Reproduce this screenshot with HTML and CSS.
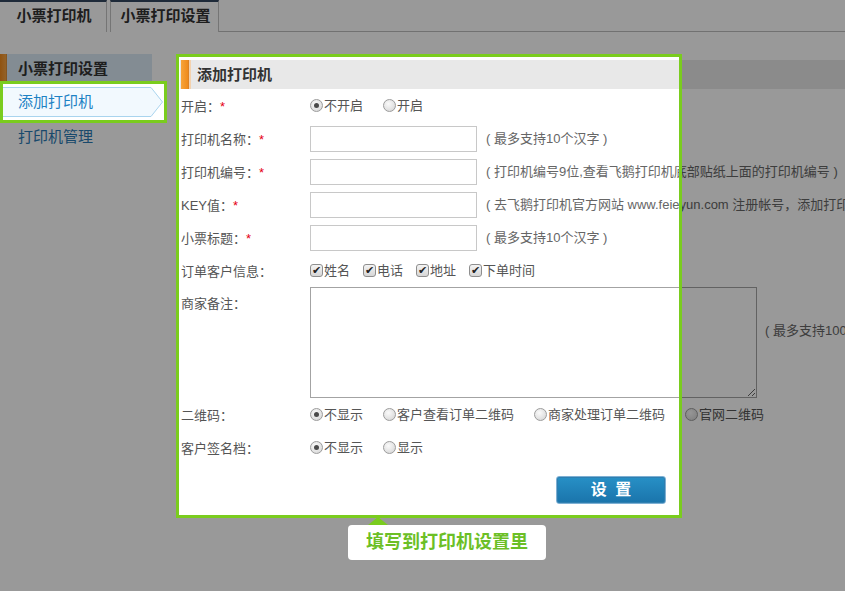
FILE: index.html
```html
<!DOCTYPE html>
<html lang="zh-CN">
<head>
<meta charset="utf-8">
<title>小票打印设置</title>
<link rel="stylesheet" href="styles.css">
</head>
<body>
<div class="page">
  <div class="tabs">
    <div class="tab">小票打印机</div>
    <div class="tab active">小票打印设置</div>
    <div class="tab-fill"></div>
  </div>
  <div class="layout">
    <aside class="side">
      <div class="side-head">小票打印设置</div>
      <div class="side-item current">
        <svg class="arrow-shape" width="164" height="30" viewBox="0 0 164 30"><polygon points="0.5,0.5 151,0.5 162.5,15 151,29.5 0.5,29.5" fill="#f2f9fe" stroke="#a9d4ee" stroke-width="1"/></svg>
        <span class="side-text">添加打印机</span>
      </div>
      <div class="side-item">打印机管理</div>
    </aside>
    <main class="main">
      <div class="main-head">添加打印机</div>
      <div class="form">
        <div class="row">
          <div class="label">开启<span class="colon">：</span><em>*</em></div>
          <div class="opts">
            <span class="opt"><span class="radio on"></span>不开启</span>
            <span class="opt"><span class="radio"></span>开启</span>
          </div>
        </div>
        <div class="row">
          <div class="label">打印机名称<span class="colon">：</span><em>*</em></div>
          <input class="field" type="text">
          <span class="hint">( 最多支持10个汉字 )</span>
        </div>
        <div class="row">
          <div class="label">打印机编号<span class="colon">：</span><em>*</em></div>
          <input class="field" type="text">
          <span class="hint">( 打印机编号9位,查看飞鹅打印机底部贴纸上面的打印机编号 )</span>
        </div>
        <div class="row">
          <div class="label">KEY值<span class="colon">：</span><em>*</em></div>
          <input class="field" type="text">
          <span class="hint">( 去飞鹅打印机官方网站 www.feieyun.com 注册帐号，添加打印机后获取KEY值 )</span>
        </div>
        <div class="row">
          <div class="label">小票标题<span class="colon">：</span><em>*</em></div>
          <input class="field" type="text">
          <span class="hint">( 最多支持10个汉字 )</span>
        </div>
        <div class="row">
          <div class="label">订单客户信息<span class="colon">：</span></div>
          <div class="opts">
            <span class="opt chk"><span class="check">✔</span>姓名</span>
            <span class="opt chk"><span class="check">✔</span>电话</span>
            <span class="opt chk"><span class="check">✔</span>地址</span>
            <span class="opt chk"><span class="check">✔</span>下单时间</span>
          </div>
        </div>
        <div class="row row-area">
          <div class="label label-top">商家备注<span class="colon">：</span></div>
          <textarea class="area"></textarea>
          <span class="hint hint-area">( 最多支持100个汉字 )</span>
        </div>
        <div class="row">
          <div class="label">二维码<span class="colon">：</span></div>
          <div class="opts">
            <span class="opt"><span class="radio on"></span>不显示</span>
            <span class="opt"><span class="radio"></span>客户查看订单二维码</span>
            <span class="opt"><span class="radio"></span>商家处理订单二维码</span>
            <span class="opt"><span class="radio"></span>官网二维码</span>
          </div>
        </div>
        <div class="row">
          <div class="label">客户签名档<span class="colon">：</span></div>
          <div class="opts">
            <span class="opt"><span class="radio on"></span>不显示</span>
            <span class="opt"><span class="radio"></span>显示</span>
          </div>
        </div>
        <div class="actions">
          <button class="btn" type="button">设 置</button>
        </div>
      </div>
    </main>
  </div>
</div>

<svg class="overlay" width="845" height="591" viewBox="0 0 845 591">
  <path fill="#000" fill-opacity="0.4" fill-rule="evenodd" d="M0 0H845V591H0Z M0 81H166V123H0Z M176 54H682V518H176Z"/>
</svg>
<div class="spot spot-menu"></div>
<div class="spot spot-dialog"></div>
<div class="tip">填写到打印机设置里</div>
</body>
</html>
```

FILE: styles.css
```css
* { box-sizing: border-box; }

html, body {
  margin: 0;
  padding: 0;
  width: 845px;
  height: 591px;
  overflow: hidden;
  background: #fff;
  font-family: "Liberation Sans", "Noto Sans CJK SC", sans-serif;
  font-size: 13px;
  color: #555;
}

.page {
  width: 845px;
  height: 591px;
  overflow: hidden;
}

/* top tabs */
.tabs {
  display: flex;
  height: 32px;
}
.tab {
  height: 32px;
  border-top: 2px solid #33465f;
  border-right: 1px solid #c4c4c4;
  font-size: 15px;
  font-weight: bold;
  color: #333;
  line-height: 28px;
  text-align: center;
  background: #fff;
}
.tab:first-child {
  width: 107px;
  padding-left: 2px;
}
.tab.active {
  width: 109px;
  margin-left: 3px;
  border-left: 1px solid #c4c4c4;
  padding-left: 2px;
}
.tab-fill {
  flex: 1;
  height: 32px;
  border-bottom: 1px solid #bcbcbc;
}

/* layout */
.layout {
  display: flex;
  margin-top: 22px;
}

.side {
  width: 152px;
  flex: none;
}
.side-head {
  height: 30px;
  line-height: 30px;
  padding-left: 18px;
  font-size: 15px;
  font-weight: bold;
  color: #333;
  background: linear-gradient(90deg, #f08a1c 0, #f6a445 6px, #c77a2a 7px, #dbe9f5 7px, #dbe9f5 100%);
}
.side-item {
  position: relative;
  height: 34px;
  line-height: 34px;
  padding-left: 18px;
  font-size: 15px;
  color: #2b7ab4;
}
.side-item.current {
  height: 36px;
  line-height: 30px;
  padding-top: 3px;
  width: 164px;
  color: #1d82c4;
}
.arrow-shape {
  position: absolute;
  left: 0;
  top: 3px;
  display: block;
}
.side-text {
  position: relative;
}

.main {
  flex: 1;
  margin-left: 28px;
  padding-top: 6px;
}
.main-head {
  height: 29px;
  line-height: 29px;
  padding-left: 17px;
  font-size: 15px;
  font-weight: bold;
  color: #333;
  background: linear-gradient(90deg, #e8e8e8 0, #e8e8e8 1px, #f7a43a 1px, #ef8b1c 8px, #c9782c 9px, #f4d2ae 9px, #f4d2ae 11px, #e8e8e8 11px);
}

/* form */
.form {
  padding-left: 1px;
}
.row {
  display: flex;
  align-items: center;
  height: 33px;
  white-space: nowrap;
}
.label {
  width: 129px;
  flex: none;
  line-height: 17px;
}
.colon {
  font-family: "Noto Sans CJK TC", "Noto Sans CJK SC", sans-serif;
}
.label em {
  font-style: normal;
  color: #e60012;
}
.opts {
  display: flex;
  align-items: center;
}
.opt {
  display: inline-flex;
  align-items: center;
  margin-right: 20px;
  line-height: 17px;
}
.opt.chk {
  margin-right: 13px;
}
.radio {
  width: 13px;
  height: 13px;
  margin-right: 1px;
  border-radius: 50%;
  border: 1px solid #9c9c9c;
  background: radial-gradient(circle at 40% 35%, #fafafa 0, #e2e2e2 60%, #cfcfcf 100%);
  display: inline-flex;
  align-items: center;
  justify-content: center;
}
.radio.on::after {
  content: "";
  width: 5px;
  height: 5px;
  border-radius: 50%;
  background: #4a4a4a;
}
.check {
  width: 13px;
  height: 13px;
  margin-right: 1px;
  border: 1px solid #8e8e8e;
  border-radius: 3px;
  background: linear-gradient(#f4f4f4, #d6d6d6);
  color: #222;
  font-size: 11px;
  line-height: 11px;
  text-align: center;
  font-family: "DejaVu Sans", sans-serif;
}
.field {
  width: 167px;
  height: 26px;
  margin: 0;
  border: 1px solid #c8c8c8;
  background: #fff;
  flex: none;
}
.hint {
  margin-left: 9px;
  color: #666;
  line-height: 17px;
}
.row-area {
  height: auto;
  align-items: flex-start;
}
.label-top {
  line-height: 32px;
}
.area {
  width: 447px;
  height: 111px;
  margin: 0;
  border: 1px solid #a3a3a3;
  flex: none;
  font: inherit;
}
.hint-area {
  margin-left: 8px;
  margin-top: 35px;
}
.actions {
  padding-top: 12px;
  padding-left: 375px;
}
.btn {
  display: block;
  width: 110px;
  height: 28px;
  margin: 0;
  padding: 0;
  border: 1px solid #7db0d4;
  border-radius: 3px;
  background: linear-gradient(#2790c6, #1a74ab);
  box-shadow: inset 0 0 0 1px #2f7fb0;
  color: #fff;
  font-family: "Liberation Sans", "Noto Sans CJK SC", sans-serif;
  font-size: 16px;
  font-weight: bold;
  line-height: 24px;
  letter-spacing: 2px;
  text-indent: 2px;
}

/* guide overlay */
.overlay {
  position: absolute;
  left: 0;
  top: 0;
  pointer-events: none;
}
.spot {
  position: absolute;
  border: 3px solid #7acc1e;
  pointer-events: none;
}
.spot-menu {
  left: 0;
  top: 81px;
  width: 167px;
  height: 42px;
}
.spot-dialog {
  left: 176px;
  top: 54px;
  width: 506px;
  height: 464px;
}
.tip {
  position: absolute;
  left: 348px;
  top: 525px;
  width: 198px;
  height: 35px;
  background: #fff;
  border-radius: 4px;
  color: #6cbf26;
  font-size: 18px;
  font-weight: bold;
  line-height: 35px;
  text-align: center;
}
.tip::before {
  content: "";
  position: absolute;
  left: 20px;
  top: -8px;
  border-left: 10px solid transparent;
  border-right: 10px solid transparent;
  border-bottom: 8px solid #7acc1e;
}
```
